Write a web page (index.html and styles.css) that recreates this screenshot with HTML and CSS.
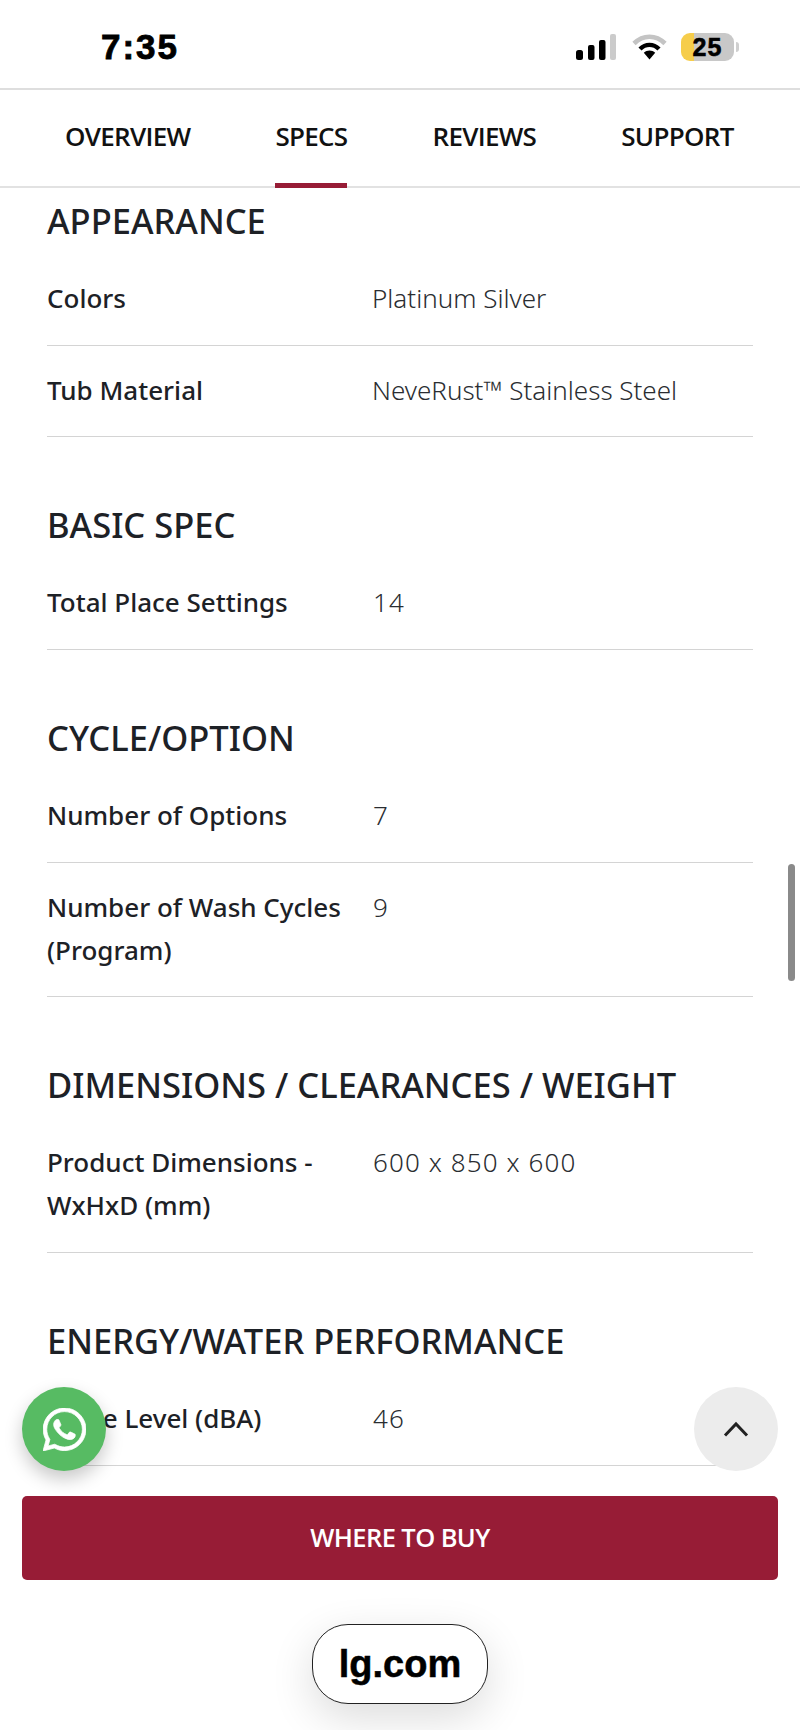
FILE: index.html
```html
<!DOCTYPE html>
<html lang="en">
<head>
<meta charset="utf-8">
<title>LG Dishwasher Specs</title>
<link rel="stylesheet" href="styles.css">
</head>
<body>
<div class="status">
  <span class="time">7:35</span>
  <div class="status-icons">
    <svg class="signal" width="40" height="26" viewBox="0 0 40 26"><rect x="0" y="16" width="7" height="10" rx="2.5" fill="#000"/><rect x="12" y="11" width="6.5" height="15" rx="2" fill="#000"/><rect x="23" y="6" width="6.5" height="20" rx="2" fill="#000"/><rect x="34" y="0" width="6" height="26" rx="2" fill="#cbcbcb"/></svg>
    <svg class="wifi" width="35" height="26" viewBox="0 0 35 26"><path d="M2 9.5C11 .5 24 .5 33 9.5" fill="none" stroke="#c4c4c4" stroke-width="4.6"/><path d="M8 15C13.500 9.500 21.500 9.500 27 15" fill="none" stroke="#000" stroke-width="4.4"/><path d="M11.800 18.800C15 15.600 20 15.600 23.200 18.800L17.500 25.500Z" fill="#000"/></svg>
    <div class="battery"><span class="battery-level">25</span><i class="battery-tip"></i></div>
  </div>
</div>
<nav class="tabs">
  <a class="tab">OVERVIEW</a>
  <a class="tab tab-active">SPECS</a>
  <a class="tab">REVIEWS</a>
  <a class="tab">SUPPORT</a>
</nav>
<main class="specs">
  <section class="group group-first">
    <h2 class="group-title">APPEARANCE</h2>
    <div class="row"><div class="label">Colors</div><div class="value">Platinum Silver</div></div>
    <div class="row"><div class="label">Tub Material</div><div class="value">NeveRust™ Stainless Steel</div></div>
  </section>
  <section class="group">
    <h2 class="group-title">BASIC SPEC</h2>
    <div class="row"><div class="label">Total Place Settings</div><div class="value value-num">14</div></div>
  </section>
  <section class="group">
    <h2 class="group-title">CYCLE/OPTION</h2>
    <div class="row"><div class="label">Number of Options</div><div class="value value-num">7</div></div>
    <div class="row"><div class="label">Number of Wash Cycles (Program)</div><div class="value value-num">9</div></div>
  </section>
  <section class="group">
    <h2 class="group-title">DIMENSIONS / CLEARANCES / WEIGHT</h2>
    <div class="row"><div class="label">Product Dimensions - WxHxD (mm)</div><div class="value value-num">600 x 850 x 600</div></div>
  </section>
  <section class="group">
    <h2 class="group-title">ENERGY/WATER PERFORMANCE</h2>
    <div class="row"><div class="label">Noise Level (dBA)</div><div class="value value-num">46</div></div>
  </section>
</main>
<div class="scrollbar"></div>
<a class="fab fab-whatsapp">
  <svg width="43" height="43" viewBox="0 32 448 448"><path fill="#fff" stroke="#fff" stroke-width="8" d="M380.900 97.100C339 55.100 283.200 32 223.900 32c-122.400 0-222 99.600-222 222 0 39.100 10.200 77.300 29.600 111L0 480l117.700-30.900c32.400 17.700 68.900 27 106.100 27h.1c122.300 0 224.100-99.600 224.100-222 0-59.300-25.200-115-67.100-157zm-157 341.600c-33.200 0-65.700-8.900-94-25.700l-6.700-4-69.800 18.300L72 359.200l-4.400-7c-18.500-29.400-28.200-63.300-28.200-98.200 0-101.700 82.800-184.500 184.600-184.500 49.300 0 95.600 19.200 130.400 54.100 34.800 34.900 56.200 81.200 56.100 130.500 0 101.800-84.900 184.600-186.600 184.600zm101.200-138.200c-5.500-2.800-32.800-16.200-37.900-18-5.100-1.900-8.800-2.800-12.500 2.800-3.700 5.600-14.300 18-17.600 21.800-3.200 3.700-6.500 4.200-12 1.400-32.600-16.300-54-29.100-75.500-66-5.700-9.800 5.700-9.100 16.300-30.300 1.800-3.700.9-6.900-.5-9.700-1.400-2.800-12.500-30.100-17.100-41.200-4.500-10.800-9.100-9.300-12.500-9.500-3.200-.2-6.900-.2-10.600-.2-3.700 0-9.700 1.400-14.800 6.900-5.100 5.600-19.400 19-19.400 46.300 0 27.300 19.900 53.700 22.600 57.400 2.800 3.700 39.100 59.700 94.800 83.800 35.200 15.200 49 16.500 66.600 13.900 10.700-1.600 32.800-13.400 37.400-26.400 4.600-13 4.600-24.100 3.200-26.400-1.300-2.500-5-3.900-10.500-6.600z"/></svg>
</a>
<a class="fab fab-top">
  <svg width="26" height="16" viewBox="0 0 26 16"><path d="M2 14.500L13 3l11 11.500" fill="none" stroke="#222" stroke-width="3"/></svg>
</a>
<a class="buy">WHERE TO BUY</a>
<div class="url-pill">lg.com</div>
</body>
</html>
```

FILE: styles.css
```css
* { box-sizing: border-box; }
html, body { margin: 0; padding: 0; background: #fff; }
body {
  position: relative;
  width: 800px;
  height: 1730px;
  overflow: hidden;
  font-family: "Noto Sans", "Open Sans", sans-serif;
  color: #1d2126;
}

/* status bar */
.status {
  height: 90px;
  border-bottom: 2px solid #dedede;
  display: flex;
  justify-content: space-between;
  align-items: flex-start;
  padding: 28px 66px 0 101px;
}
.time {
  font: 700 35px/38px "Liberation Sans", Arial, sans-serif;
  color: #000;
  -webkit-text-stroke: 0.8px #000;
  letter-spacing: 2px;
}
.status-icons { display: flex; align-items: flex-start; padding-top: 6px; }
.signal { display: block; }
.wifi { display: block; margin-left: 16px; }
.battery {
  position: relative;
  width: 53px;
  height: 28px;
  margin-left: 14px;
  margin-top: -1px;
  border-radius: 9px;
  background: linear-gradient(90deg, #f6cd4b 0, #f6cd4b 13px, #c8c8c8 13px);
  text-align: center;
}
.battery-level {
  font: 700 25px/28px "Liberation Sans", Arial, sans-serif;
  color: #000;
  -webkit-text-stroke: 0.6px #000;
  letter-spacing: 1px;
}
.battery-tip {
  position: absolute;
  right: -5px;
  top: 9px;
  width: 3px;
  height: 10px;
  border-radius: 0 3px 3px 0;
  background: #cfcfcf;
}

/* tabs */
.tabs {
  height: 98px;
  border-bottom: 2px solid #e2e2e2;
  display: flex;
  gap: 85px;
  padding-left: 65px;
}
.tab {
  position: relative;
  font-family: "Open Sans", sans-serif;
  font-size: 26px;
  font-weight: 600;
  line-height: 92px;
  color: #111;
  letter-spacing: -0.7px;
}
.tab-active::after {
  content: "";
  position: absolute;
  left: 0;
  right: 0;
  bottom: -2px;
  height: 5px;
  background: #971c36;
}

/* specs */
.specs { padding: 0 47px; }
.group { padding-top: 66px; }
.group-first { padding-top: 11px; }
.group-title {
  margin: 0 0 9px;
  font-size: 34.5px;
  font-weight: 500;
  line-height: 44px;
  padding-bottom: 2px;
  color: #1d2126;
}
.row {
  display: flex;
  padding: 23px 0 24px;
  border-bottom: 1px solid #d4d4d4;
  font-size: 26px;
  line-height: 43px;
}
.group-title + .row { padding-bottom: 25px; }
.label { width: 325px; padding-right: 20px; font-weight: 500; }
.value { font-weight: 300; color: #2a2d31; }
.value-num { letter-spacing: 1.1px; padding-left: 1px; }

/* overlays */
.scrollbar {
  position: absolute;
  left: 788px;
  top: 864px;
  width: 7px;
  height: 117px;
  border-radius: 4px;
  background: #8a8a8a;
}
.fab {
  position: absolute;
  top: 1387px;
  width: 84px;
  height: 84px;
  border-radius: 50%;
  display: flex;
  align-items: center;
  justify-content: center;
}
.fab-whatsapp {
  left: 22px;
  background: #57bb63;
  box-shadow: 0 8px 18px rgba(0, 0, 0, 0.22);
}
.fab-top { left: 694px; background: #ececec; }
.buy {
  position: absolute;
  left: 22px;
  top: 1496px;
  width: 756px;
  height: 84px;
  border-radius: 5px;
  background: #971c36;
  color: #fff;
  font-family: "Open Sans", sans-serif;
  font-size: 25.5px;
  font-weight: 600;
  line-height: 82px;
  text-align: center;
  letter-spacing: -0.6px;
}
.url-pill {
  position: absolute;
  left: 312px;
  top: 1624px;
  width: 176px;
  height: 80px;
  border: 1px solid #222;
  border-radius: 36px;
  background: #fff;
  box-shadow: 0 14px 44px rgba(0, 0, 0, 0.14);
  font: 700 38px/78px "Liberation Sans", Arial, sans-serif;
  -webkit-text-stroke: 0.5px #000;
  color: #000;
  text-align: center;
}
```
